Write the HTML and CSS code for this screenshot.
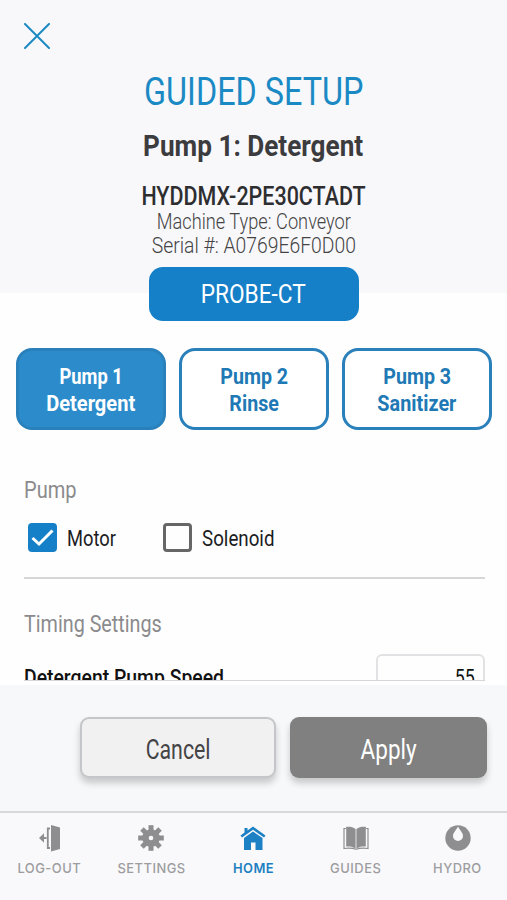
FILE: index.html
```html
<!DOCTYPE html>
<html lang="en">
<head>
<meta charset="utf-8">
<title>Guided Setup</title>
<link rel="stylesheet" href="styles.css">
</head>
<body>
<div class="app">
  <header class="header">
    <svg class="close" viewBox="0 0 26 26"><path d="M1 1L25 25M25 1L1 25"/></svg>
    <h1 class="title"><span class="t n85">GUIDED SETUP</span></h1>
    <h2 class="subtitle"><span class="t n90">Pump 1: Detergent</span></h2>
    <p class="model"><span class="t n86">HYDDMX-2PE30CTADT</span></p>
    <p class="meta"><span class="t n81">Machine Type: Conveyor</span></p>
    <p class="meta"><span class="t n86">Serial #: A0769E6F0D00</span></p>
    <button class="probe"><span class="t n87">PROBE-CT</span></button>
  </header>
  <main class="content">
    <div class="tabs">
      <button class="tab active"><span class="t n85">Pump 1</span><span class="t n93">Detergent</span></button>
      <button class="tab"><span class="t n91">Pump 2</span><span class="t n91">Rinse</span></button>
      <button class="tab"><span class="t n91">Pump 3</span><span class="t n92">Sanitizer</span></button>
    </div>
    <section class="group">
      <h3 class="label"><span class="t n87">Pump</span></h3>
      <div class="checks">
        <div class="check"><span class="box checked"><svg viewBox="0 0 29 29"><path d="M4.500 15L11 21L24.500 7.500"/></svg></span><span class="t n83">Motor</span></div>
        <div class="check"><span class="box"></span><span class="t n85">Solenoid</span></div>
      </div>
    </section>
    <section class="group timing">
      <h3 class="label"><span class="t n86">Timing Settings</span></h3>
      <div class="row"><span class="t n88">Detergent Pump Speed</span><span class="input"><span class="t n81">55</span></span></div>
    </section>
  </main>
  <footer class="actions">
    <button class="btn cancel"><span class="t n79">Cancel</span></button>
    <button class="btn apply"><span class="t n83">Apply</span></button>
  </footer>
  <nav class="nav">
    <div class="item"><svg viewBox="0 0 28 28"><path d="M16 1L25 3.500V25L16 27.500Z"/><path class="line" d="M15 4.500H12.800V24H15M11.500 14H6"/><path d="M4 14L9 9.200V18.800Z"/></svg><span class="t n96">LOG-OUT</span></div>
    <div class="item"><svg viewBox="0 0 28 28"><g><rect x="11.500" y="1.200" width="5" height="25.600"/><rect x="11.500" y="1.200" width="5" height="25.600" transform="rotate(45 14 14)"/><rect x="11.500" y="1.200" width="5" height="25.600" transform="rotate(90 14 14)"/><rect x="11.500" y="1.200" width="5" height="25.600" transform="rotate(135 14 14)"/><circle cx="14" cy="14" r="8.800"/></g><circle class="hole" cx="14" cy="14" r="2.300"/></svg><span class="t n96">SETTINGS</span></div>
    <div class="item current"><svg viewBox="0 0 28 28"><path d="M14 2.500L26.500 11.500L25 13.500L14 5.700L3 13.500L1.500 11.500L5.500 8.500V4H8.500V6.400Z"/><path d="M14 7.500L23.500 14V26H16.500V18.500H12V26H5V14Z"/></svg><span class="t n96">HOME</span></div>
    <div class="item"><svg viewBox="0 0 28 28"><path d="M13.600 5C11 3 8 2.500 4.200 2.800V22.500C8 22.200 11 22.700 13.600 24.500ZM14.400 5C17 3 20 2.500 23.800 2.800V22.500C20 22.200 17 22.700 14.400 24.500Z"/><path class="thin" d="M4 4.500H2V24.500C7 23.800 11 24.200 14 25.300C17 24.200 21 23.800 26 24.500V4.500H24"/></svg><span class="t n96">GUIDES</span></div>
    <div class="item"><svg viewBox="0 0 28 28"><circle cx="14" cy="14" r="12.700"/><path class="hole" d="M14 2.500C15.500 6 19 8.500 19 12A5 5 0 0 1 9 12C9 8.500 12.500 6 14 2.500Z"/></svg><span class="t n96">HYDRO</span></div>
  </nav>
</div>
</body>
</html>
```
FILE: styles.css
```css
* { box-sizing: border-box; margin: 0; padding: 0; }
body { font-family: Roboto, "Liberation Sans", sans-serif; background: #fff; }
button { font: inherit; border: 0; }
.app { width: 507px; height: 900px; display: flex; flex-direction: column; overflow: hidden; }

/* condensed text widths */
.t { display: inline-block; white-space: nowrap; }
.n79 { transform: scaleX(.79); }
.n81 { transform: scaleX(.81); }
.n83 { transform: scaleX(.833); }
.n85 { transform: scaleX(.852); }
.n86 { transform: scaleX(.859); }
.n87 { transform: scaleX(.872); }
.n88 { transform: scaleX(.881); }
.n90 { transform: scaleX(.901); }
.n91 { transform: scaleX(.913); }
.n92 { transform: scaleX(.922); }
.n93 { transform: scaleX(.933); }
.n96 { transform: scaleX(.958); }

.header { height: 293px; padding-top: 23px; background: #f8f8fb; display: flex; flex-direction: column; align-items: center; flex: none; }
.close { flex: none; width: 26px; height: 26px; margin-left: 24px; align-self: flex-start; fill: none; stroke: #1b8ac0; stroke-width: 2; stroke-linecap: round; }
.title { margin-top: 23px; font-size: 38px; line-height: 40px; font-weight: 400; color: #1b8ac4; }
.subtitle { margin-top: 19px; font-size: 29px; line-height: 30px; font-weight: 700; color: #3c3c3e; }
.model { margin-top: 23px; font-size: 25px; line-height: 25px; font-weight: 500; color: #2e2e30; }
.meta { font-size: 22.5px; line-height: 24px; font-weight: 300; color: #444; }
.probe { position: relative; z-index: 1; flex: none; width: 210px; height: 54px; margin-top: 10px; border-radius: 14px; background: #1580c8; color: #fff; font-size: 26px; }

.content { height: 388px; flex: none; overflow: hidden; background: #fefefe; }
.tabs { display: grid; grid-template-columns: repeat(3, 1fr); gap: 13px; margin: 55px 14.5px 0 15.5px; }
.tab { height: 82px; padding-top: 2px; border: 3px solid #2a80bb; border-radius: 16px; background: #fff; color: #2079b5; font-size: 21.5px; line-height: 27.5px; font-weight: 700; display: flex; flex-direction: column; align-items: center; justify-content: center; }
.tab.active { background: #2c8ccb; color: #fff; }
.group { margin: 46px 22.5px 0 24px; border-bottom: 2px solid #d6d6d8; height: 103px; }
.label { font-size: 23px; line-height: 29px; font-weight: 400; color: #8b8b8d; }
.label .t, .check .t, .row > .t { transform-origin: left; }
.checks { display: flex; margin: 17px 0 0 4px; }
.check { width: 135px; display: flex; align-items: center; font-size: 22px; line-height: 28px; color: #1c1c1e; gap: 10px; }
.check .t { padding-top: 3px; }
.box { width: 29px; height: 29px; border: 3px solid #666; border-radius: 4px; flex: none; }
.box.checked { border: 0; background: #1580c8; }
.box svg { display: block; fill: none; stroke: #fff; stroke-width: 3; }
.timing { margin-top: 31px; height: 72px; overflow: hidden; }
.row { display: flex; justify-content: space-between; font-size: 22px; font-weight: 500; color: #111; margin-top: 15px; line-height: 48px; }
.input { width: 109px; height: 50px; border: 2px solid #e2e2e4; border-radius: 6px; text-align: right; padding-right: 8px; font-weight: 400; line-height: 44px; }
.input .t { transform-origin: right; }

.actions { flex: none; height: 126px; margin-top: 4px; background: #f7f8fa; display: grid; grid-template-columns: 1fr 1fr; gap: 14px; padding: 32px 20px 0 79.5px; }
.btn { height: 61px; padding-top: 5px; border-radius: 9px; font-size: 27px; box-shadow: 0 5px 7px rgba(0,0,0,.2); }
.cancel { background: #f2f1f2; border: 2px solid #c5c6c9; color: #444446; }
.apply { background: #808080; color: #fff; }

.nav { flex: 1; margin: 0 -2px; border-top: 2px solid #d8d8da; background: #f9f9fb; display: grid; grid-template-columns: repeat(5, 1fr); }
.item { display: flex; flex-direction: column; align-items: center; padding-top: 11px; font: 500 13.5px/16px Inter, sans-serif; letter-spacing: .5px; color: #9d9da0; }
.item svg { width: 28px; height: 28px; margin-bottom: 8px; fill: #8e8e91; }
.item .line { fill: none; stroke: #8e8e91; stroke-width: 1.8; }
.item .thin { fill: none; stroke: #8e8e91; stroke-width: 1.2; }
.item .hole { fill: #f9f9fb; }
.item.current { color: #1c7fc0; font-weight: 600; }
.item.current svg { fill: #1c80c4; }
```
